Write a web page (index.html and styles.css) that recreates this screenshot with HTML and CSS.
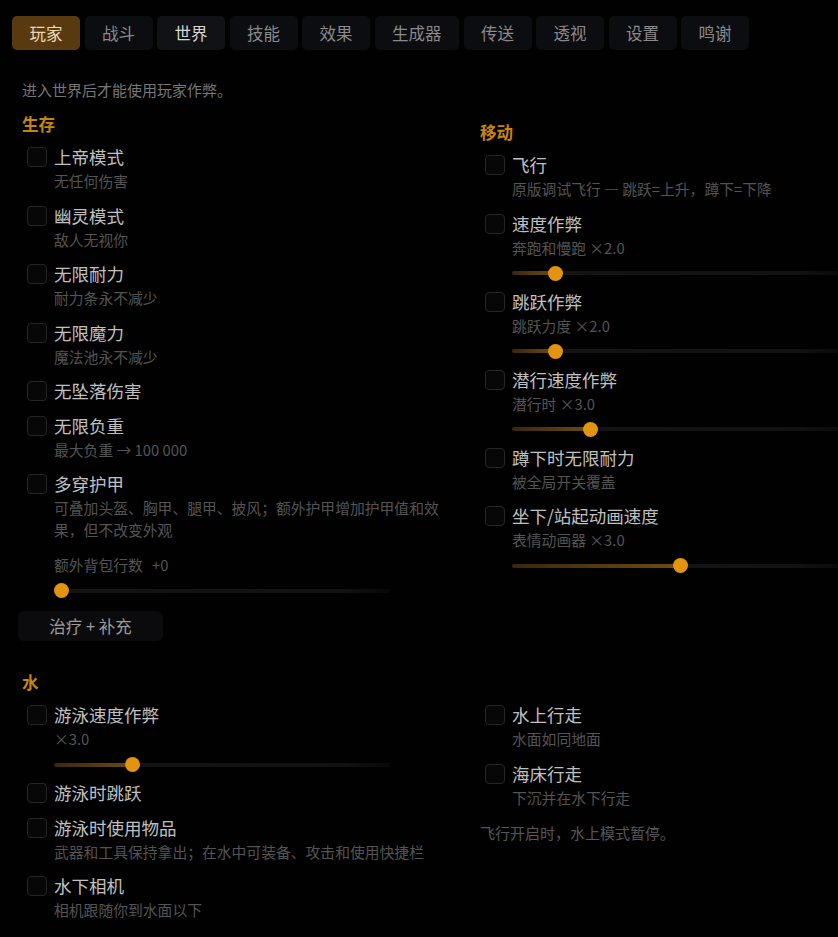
FILE: index.html
```html
<!DOCTYPE html>
<html lang="zh-CN">
<head>
    <meta charset="UTF-8">
    <meta name="viewport" content="width=device-width, initial-scale=1.0">
    <title>玩家</title>
    <link rel="stylesheet" href="styles.css">
</head>
<body>
    <div class="tabs">
        <button class="tab active">玩家</button>
        <button class="tab">战斗</button>
        <button class="tab hover">世界</button>
        <button class="tab">技能</button>
        <button class="tab">效果</button>
        <button class="tab">生成器</button>
        <button class="tab">传送</button>
        <button class="tab">透视</button>
        <button class="tab">设置</button>
        <button class="tab">鸣谢</button>
    </div>

    <div class="panel">
        <p class="intro">进入世界后才能使用玩家作弊。</p>

        <div class="cols">
            <div class="col">
                <h2 class="group">生存</h2>
                <label class="opt">
                    <input type="checkbox">
                    <span class="txt"><span class="name">上帝模式</span><span class="hint">无任何伤害</span></span>
                </label>
                <label class="opt">
                    <input type="checkbox">
                    <span class="txt"><span class="name">幽灵模式</span><span class="hint">敌人无视你</span></span>
                </label>
                <label class="opt">
                    <input type="checkbox">
                    <span class="txt"><span class="name">无限耐力</span><span class="hint">耐力条永不减少</span></span>
                </label>
                <label class="opt">
                    <input type="checkbox">
                    <span class="txt"><span class="name">无限魔力</span><span class="hint">魔法池永不减少</span></span>
                </label>
                <label class="opt">
                    <input type="checkbox">
                    <span class="txt"><span class="name">无坠落伤害</span></span>
                </label>
                <label class="opt">
                    <input type="checkbox">
                    <span class="txt"><span class="name">无限负重</span><span class="hint">最大负重 → 100 000</span></span>
                </label>
                <label class="opt">
                    <input type="checkbox">
                    <span class="txt"><span class="name">多穿护甲</span><span class="hint">可叠加头盔、胸甲、腿甲、披风；额外护甲增加护甲值和效果，但不改变外观</span></span>
                </label>
                <div class="extra">
                    <span class="hint">额外背包行数 <span class="val">+0</span></span>
                    <input class="range" type="range" min="0" max="9" value="0" style="--f: 0">
                </div>
                <button class="action">治疗 + 补充</button>
            </div>

            <div class="col col-move">
                <h2 class="group">移动</h2>
                <label class="opt">
                    <input type="checkbox">
                    <span class="txt"><span class="name">飞行</span><span class="hint">原版调试飞行 — 跳跃=上升，蹲下=下降</span></span>
                </label>
                <div class="opt">
                    <input type="checkbox">
                    <span class="txt">
                        <span class="name">速度作弊</span><span class="hint">奔跑和慢跑 ×2.0</span>
                        <input class="range" type="range" min="1" max="10" step="0.1" value="2" style="--f: 0.111">
                    </span>
                </div>
                <div class="opt">
                    <input type="checkbox">
                    <span class="txt">
                        <span class="name">跳跃作弊</span><span class="hint">跳跃力度 ×2.0</span>
                        <input class="range" type="range" min="1" max="10" step="0.1" value="2" style="--f: 0.111">
                    </span>
                </div>
                <div class="opt">
                    <input type="checkbox">
                    <span class="txt">
                        <span class="name">潜行速度作弊</span><span class="hint">潜行时 ×3.0</span>
                        <input class="range" type="range" min="1" max="10" step="0.1" value="3" style="--f: 0.222">
                    </span>
                </div>
                <label class="opt">
                    <input type="checkbox">
                    <span class="txt"><span class="name">蹲下时无限耐力</span><span class="hint">被全局开关覆盖</span></span>
                </label>
                <div class="opt">
                    <input type="checkbox">
                    <span class="txt">
                        <span class="name">坐下/站起动画速度</span><span class="hint">表情动画器 ×3.0</span>
                        <input class="range" type="range" min="1" max="5" step="0.1" value="3" style="--f: 0.5">
                    </span>
                </div>
            </div>
        </div>

        <h2 class="group group-water">水</h2>

        <div class="cols">
            <div class="col">
                <div class="opt">
                    <input type="checkbox">
                    <span class="txt">
                        <span class="name">游泳速度作弊</span><span class="hint">×3.0</span>
                        <input class="range" type="range" min="1" max="10" step="0.1" value="3" style="--f: 0.222">
                    </span>
                </div>
                <label class="opt">
                    <input type="checkbox">
                    <span class="txt"><span class="name">游泳时跳跃</span></span>
                </label>
                <label class="opt">
                    <input type="checkbox">
                    <span class="txt"><span class="name">游泳时使用物品</span><span class="hint">武器和工具保持拿出；在水中可装备、攻击和使用快捷栏</span></span>
                </label>
                <label class="opt">
                    <input type="checkbox">
                    <span class="txt"><span class="name">水下相机</span><span class="hint">相机跟随你到水面以下</span></span>
                </label>
            </div>

            <div class="col">
                <label class="opt">
                    <input type="checkbox">
                    <span class="txt"><span class="name">水上行走</span><span class="hint">水面如同地面</span></span>
                </label>
                <label class="opt">
                    <input type="checkbox">
                    <span class="txt"><span class="name">海床行走</span><span class="hint">下沉并在水下行走</span></span>
                </label>
                <p class="note">飞行开启时，水上模式暂停。</p>
            </div>
        </div>
    </div>
</body>
</html>
```

FILE: styles.css
```css
body {
    font-family: "Noto Sans CJK SC", "Noto Sans", sans-serif;
    background-color: #010101;
    color: #c2c2c2;
    margin: 0;
    padding: 16px 0 0 12px;
    overflow-x: hidden;
}

/* top tab bar */
.tabs {
    display: flex;
    gap: 4.5px;
}
.tab {
    font-family: inherit;
    font-size: 16.5px;
    height: 34px;
    padding: 0 17.5px;
    border: none;
    border-radius: 5px;
    background-color: #0c0d10;
    color: #8a8a8a;
    cursor: pointer;
}
.tab.hover {
    background-color: #111216;
    color: #d6d6d6;
}
.tab.active {
    background-color: #593a10;
    color: #ecd9b8;
}

.panel {
    padding: 29px 0 0 10px;
}
.intro {
    margin: 0 0 12px;
    font-size: 15px;
    line-height: 22px;
    color: #777;
}
.group {
    margin: 0 0 -1.5px;
    font-size: 16.5px;
    line-height: 22px;
    font-weight: 700;
    color: #c5850f;
}
.group-water {
    margin: 30px 0 11.5px;
}

.cols {
    display: grid;
    grid-template-columns: 424px 424px;
    column-gap: 34px;
}
.col {
    display: flex;
    flex-direction: column;
    align-items: flex-start;
    gap: 12.5px;
}
.col-move {
    padding-top: 8px;
}

/* option rows */
.opt {
    display: flex;
    gap: 7px;
    padding-left: 5px;
    cursor: pointer;
}
.opt input[type="checkbox"] {
    -webkit-appearance: none;
    appearance: none;
    flex: none;
    width: 20px;
    height: 20px;
    margin: 1px 0 0;
    border: 1.5px solid #252525;
    border-radius: 4px;
    background-color: #070707;
    box-sizing: border-box;
}
.txt {
    display: flex;
    flex-direction: column;
}
.name {
    font-size: 17.5px;
    line-height: 22px;
    color: #c0c0c0;
}
.hint {
    margin-top: 2px;
    font-size: 14.8px;
    line-height: 22px;
    color: #545454;
}
.val {
    margin-left: 6px;
}

/* sliders */
.range {
    -webkit-appearance: none;
    appearance: none;
    display: block;
    width: 336px;
    height: 15px;
    margin: 7px 0 -2.5px;
    background: transparent;
    --fill: calc(7.5px + 321px * var(--f));
}
.range::-webkit-slider-runnable-track {
    height: 4px;
    border-radius: 2px;
    background: linear-gradient(90deg, #3a270c 0, #6e4a15 var(--fill), #141414 var(--fill), #121212 85%, #080808 100%);
}
.range::-webkit-slider-thumb {
    -webkit-appearance: none;
    width: 15px;
    height: 15px;
    margin-top: -5.5px;
    border: none;
    border-radius: 50%;
    background-color: #e2930f;
}

.extra {
    padding-left: 32px;
}
.extra .hint {
    display: block;
    margin: 0;
}
.extra .range {
    margin: 7.5px 0 0;
}

.action {
    font-family: inherit;
    font-size: 16.5px;
    width: 145px;
    height: 30px;
    margin-left: -4px;
    border: none;
    border-radius: 6px;
    background-color: #0b0b0d;
    color: #9c9c9c;
    cursor: pointer;
}

.note {
    margin: 1px 0 0;
    font-size: 15px;
    line-height: 22px;
    color: #575757;
}
```
